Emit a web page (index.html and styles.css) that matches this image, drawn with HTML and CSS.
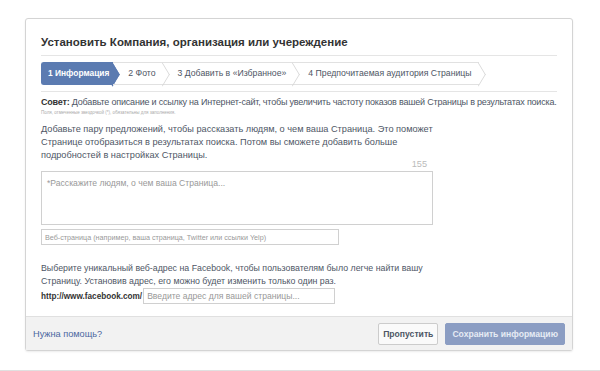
FILE: index.html
```html
<!DOCTYPE html>
<html lang="ru">
<head>
  <meta charset="UTF-8">
  <title>Установить Компания, организация или учереждение</title>
  <link rel="stylesheet" href="styles.css">
</head>
<body>
  <div class="page">
    <div class="dialog">
      <div class="dialog-head">
        <h1>Установить Компания, организация или учереждение</h1>
        <div class="steps">
          <div class="step active">1 Информация</div>
          <div class="step">2 Фото</div>
          <div class="step">3 Добавить в «Избранное»</div>
          <div class="step">4 Предпочитаемая аудитория Страницы</div>
        </div>
      </div>

      <div class="dialog-body">
        <p class="tip"><b>Совет:</b> Добавьте описание и ссылку на Интернет-сайт, чтобы увеличить частоту показов вашей Страницы в результатах поиска.</p>
        <p class="note">Поля, отмеченные звездочкой (*), обязательны для заполнения.</p>

        <p class="text">Добавьте пару предложений, чтобы рассказать людям, о чем ваша Страница. Это поможет Странице отобразиться в результатах поиска. Потом вы сможете добавить больше подробностей в настройках Страницы.</p>

        <div class="about">
          <div class="counter">155</div>
          <textarea placeholder="*Расскажите людям, о чем ваша Страница..."></textarea>
        </div>
        <input class="site" type="text" placeholder="Веб-страница (например, ваша страница, Twitter или ссылки Yelp)">

        <p class="text address-text">Выберите уникальный веб-адрес на Facebook, чтобы пользователям было легче найти вашу Страницу. Установив адрес, его можно будет изменить только один раз.</p>
        <div class="address">
          <span class="prefix">http://www.facebook.com/</span>
          <input type="text" placeholder="Введите адрес для вашей страницы...">
        </div>
      </div>

      <div class="dialog-foot">
        <a href="#" class="help">Нужна помощь?</a>
        <div class="buttons">
          <button class="btn">Пропустить</button>
          <button class="btn btn-primary" disabled>Сохранить информацию</button>
        </div>
      </div>
    </div>
  </div>
</body>
</html>
```

FILE: styles.css
```css
html, body {
  margin: 0;
  padding: 0;
  background: #fff;
}
body {
  font-family: 'Liberation Sans', Arial, sans-serif;
  font-size: 9.2px;
  color: #4e5665;
  height: 371px;
  overflow: hidden;
  border-bottom: 1px solid #e0e0e0;
  box-sizing: border-box;
}
.page {
  padding: 18px 0 0 25px;
}
.dialog {
  width: 546px;
  border: 1px solid #d4d4d4;
  border-radius: 3px;
  background: #fff;
  box-shadow: 0 1px 2px rgba(0, 0, 0, 0.08);
}
.dialog-head {
  margin: 0 15px;
}
h1 {
  margin: 0;
  padding: 17px 0 6px;
  font-size: 11.5px;
  line-height: 13px;
  font-weight: bold;
  color: #333;
  border-bottom: 1px solid #e5e5e5;
}

/* steps bar */
.steps {
  position: relative;
  z-index: 0;
  display: flex;
  margin-top: 6px;
  padding-bottom: 6px;
  border-bottom: 1px solid #e5e5e5;
}
.step {
  position: relative;
  height: 21px;
  line-height: 21px;
  padding: 0 7px 0 15px;
  font-size: 8.7px;
  border-top: 1px solid #e1e1e1;
  border-bottom: 1px solid #e1e1e1;
  color: #4e5665;
  white-space: nowrap;
}
.step::after {
  content: "";
  position: absolute;
  top: 2.5px;
  right: -8px;
  width: 16px;
  height: 16px;
  border-top: 1px solid #d6d6d6;
  border-right: 1px solid #d6d6d6;
  transform: scaleX(0.6) rotate(45deg);
  z-index: 1;
}
.step:first-child {
  border-left: 1px solid #e1e1e1;
  border-radius: 3px 0 0 3px;
}
.step.active {
  background: #5b7bb1;
  border-color: #5b7bb1;
  color: #fff;
  font-size: 8.4px;
  font-weight: bold;
  padding-left: 6px;
  padding-right: 4px;
}
.step.active::after {
  background: #5b7bb1;
  border-color: #5b7bb1;
  z-index: -1;
}

.dialog-body {
  padding: 4px 15px 12px;
}
p {
  margin: 0;
}
.tip {
  font-size: 9px;
  letter-spacing: -0.2px;
  line-height: 12px;
  white-space: nowrap;
}
.tip b {
  color: #333;
}
.note {
  font-size: 4.5px;
  color: #aaa;
  line-height: 9px;
  margin-bottom: 6px;
}
.text {
  width: 400px;
  line-height: 13px;
}
.about {
  width: 392px;
}
.counter {
  text-align: right;
  color: #bbb;
  padding-right: 6px;
  line-height: 10px;
  margin-top: -3px;
}
textarea, input {
  font-family: inherit;
  font-size: 8.6px;
  color: #333;
  border: 1px solid #d0d0d0;
  border-radius: 0;
  outline: none;
  box-sizing: border-box;
  margin: 0;
}
textarea {
  display: block;
  width: 392px;
  height: 54px;
  margin-top: 2px;
  padding: 6px 5px;
  resize: none;
}
::placeholder {
  color: #999;
}
.site {
  display: block;
  width: 298px;
  height: 16px;
  padding: 0 3px;
  margin-top: 4px;
  margin-bottom: 17px;
  font-size: 7.2px;
}
.address-text {
  width: 395px;
  font-size: 8.8px;
}
.address {
  display: flex;
  align-items: center;
}
.prefix {
  font-size: 8.2px;
  font-weight: bold;
  color: #333;
  padding-right: 1px;
}
.address input {
  width: 192px;
  height: 16px;
  padding: 0 3px;
}

.dialog-foot {
  display: flex;
  align-items: center;
  justify-content: space-between;
  height: 33px;
  padding: 0 7px 0 7px;
  background: #f2f2f2;
  border-top: 1px solid #e0e0e0;
}
.help {
  color: #4b67a1;
  text-decoration: none;
}
.buttons {
  display: flex;
  gap: 7px;
}
.btn {
  font-family: inherit;
  font-size: 8.6px;
  font-weight: bold;
  height: 22px;
  padding: 0 4px;
  border: 1px solid #ccc;
  border-radius: 2px;
  background: #fafafa;
  color: #4e5665;
}
.btn-primary {
  background: #8b9dc3;
  border-color: #8b9dc3;
  color: #e6ebf4;
  padding: 0 6px;
}
```
